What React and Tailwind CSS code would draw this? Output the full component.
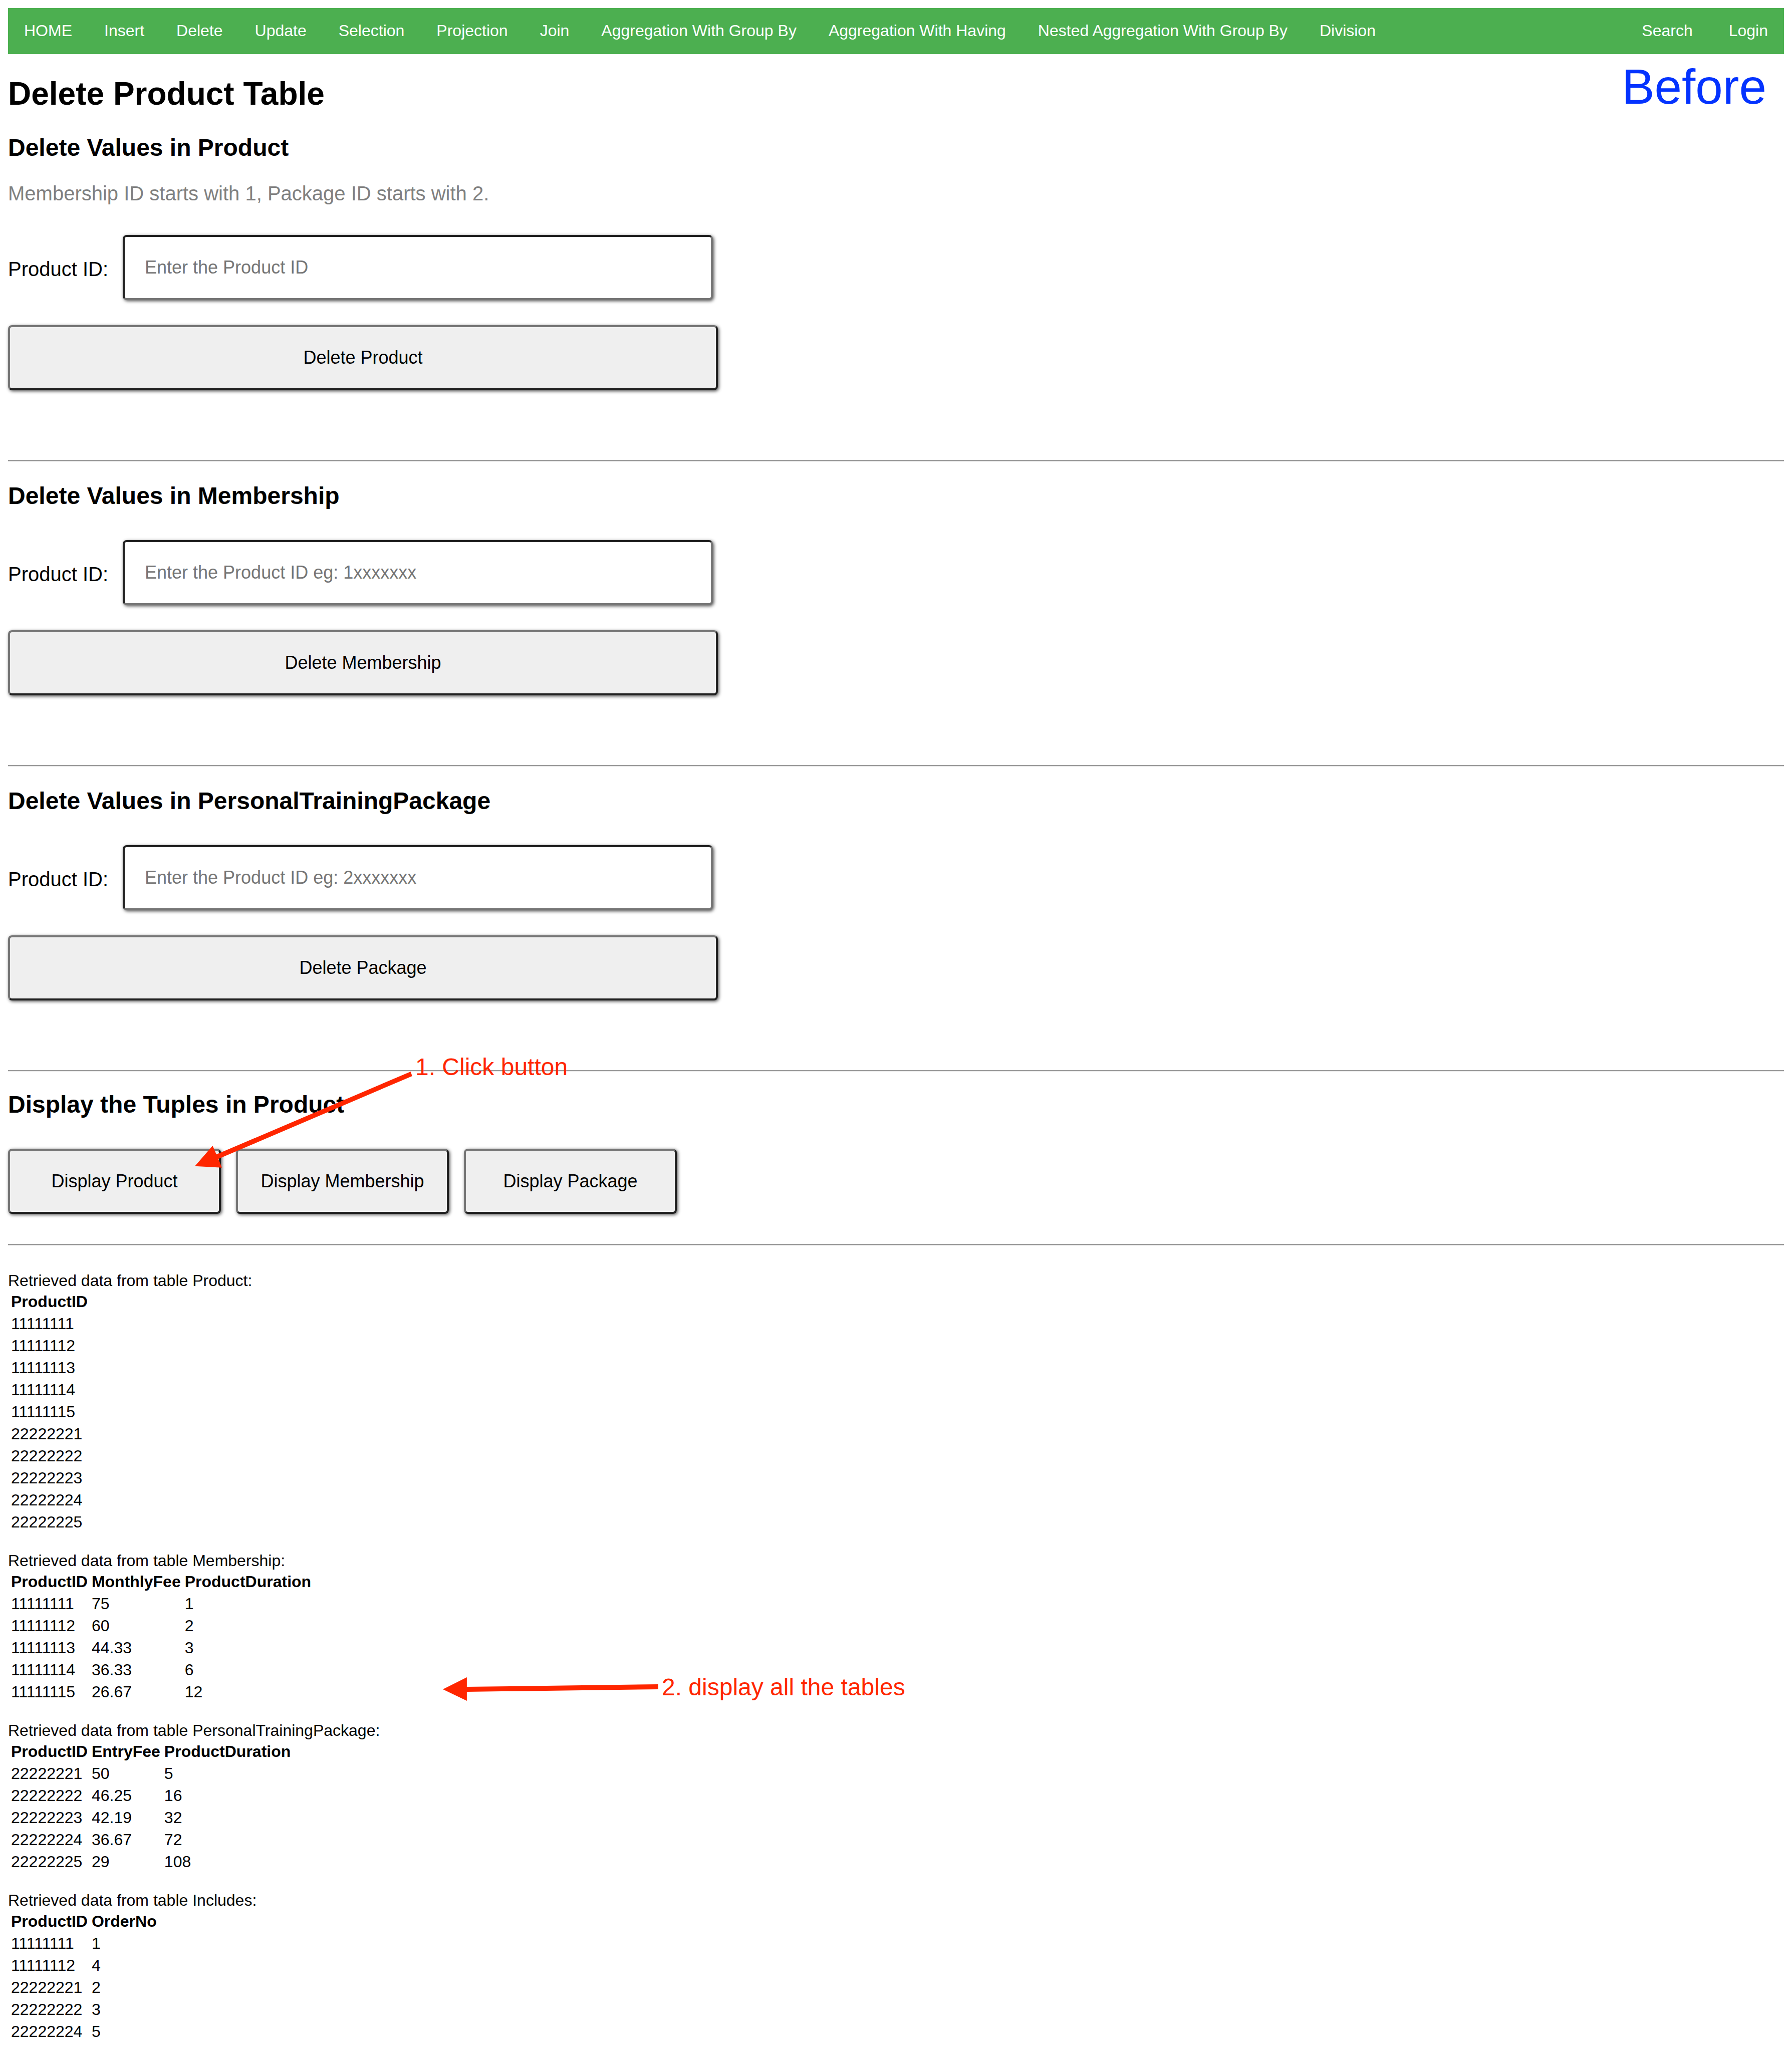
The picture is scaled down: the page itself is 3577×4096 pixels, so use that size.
const links = ["HOME", "Insert", "Delete", "Update", "Selection", "Projection", "Join", "Aggregation With Group By", "Aggregation With Having", "Nested Aggregation With Group By", "Division"];

const forms = [
  { id: "product", title: "Delete Values in Product", note: "Membership ID starts with 1, Package ID starts with 2.", hint: "Enter the Product ID", action: "Delete Product" },
  { id: "membership", title: "Delete Values in Membership", hint: "Enter the Product ID eg: 1xxxxxxx", action: "Delete Membership" },
  { id: "package", title: "Delete Values in PersonalTrainingPackage", hint: "Enter the Product ID eg: 2xxxxxxx", action: "Delete Package" },
];

const tables = [
  { name: "Product", head: ["ProductID"], rows: [["11111111"], ["11111112"], ["11111113"], ["11111114"], ["11111115"], ["22222221"], ["22222222"], ["22222223"], ["22222224"], ["22222225"]] },
  { name: "Membership", head: ["ProductID", "MonthlyFee", "ProductDuration"], rows: [["11111111", "75", "1"], ["11111112", "60", "2"], ["11111113", "44.33", "3"], ["11111114", "36.33", "6"], ["11111115", "26.67", "12"]] },
  { name: "PersonalTrainingPackage", head: ["ProductID", "EntryFee", "ProductDuration"], rows: [["22222221", "50", "5"], ["22222222", "46.25", "16"], ["22222223", "42.19", "32"], ["22222224", "36.67", "72"], ["22222225", "29", "108"]] },
  { name: "Includes", head: ["ProductID", "OrderNo"], rows: [["11111111", "1"], ["11111112", "4"], ["22222221", "2"], ["22222222", "3"], ["22222224", "5"]] },
];

function Rule() {
  return <hr className="h-1 border-0 border-t-2 border-t-[#9a9a9a] bg-[#eeeeee]" />;
}

function NavLink({ children }) {
  return <a href="#" className="px-8 pt-[27px] pb-[29px]">{children}</a>;
}

function Button({ children, className }) {
  return (
    <button type="button" className={"h-[130px] rounded-lg border-4 border-t-[#767676] border-l-[#767676] border-b-[#212121] border-r-[#212121] bg-[#efefef] text-4xl text-black shadow-[2px_2px_6px_#555] " + className}>
      {children}
    </button>
  );
}

function DeleteForm({ id, title, note, hint, action }) {
  return (
    <section className="pb-[139px]">
      <h2 className="text-5xl leading-[56px] font-bold">{title}</h2>
      {note && <p className="mt-10 text-[40px] leading-[46px] text-[#808080]">{note}</p>}
      <form className="mt-[60px]" onSubmit={(e) => e.preventDefault()}>
        <div className="flex items-center">
          <label htmlFor={id} className="w-[229px] pt-1.5 text-[40px] leading-[46px]">Product ID:</label>
          <input id={id} type="text" placeholder={hint} className="h-[130px] w-[1178px] rounded-lg border-4 border-t-[#212121] border-l-[#212121] border-b-[#767676] border-r-[#767676] bg-white px-10 text-4xl shadow-[2px_2px_6px_#555] placeholder:text-[#757575]" />
        </div>
        <Button className="mt-[50px] block w-[1417px]">{action}</Button>
      </form>
    </section>
  );
}

export default function App() {
  return (
    <div className="relative min-h-screen overflow-hidden bg-white px-4 pt-4 font-['Liberation_Sans',Arial,sans-serif] text-[32px] leading-9 text-black">
      <nav className="flex bg-[#4caf50] text-white">
        {links.map((l) => <NavLink key={l}>{l}</NavLink>)}
        <div className="ml-auto flex gap-2">
          <NavLink>Search</NavLink>
          <NavLink>Login</NavLink>
        </div>
      </nav>

      <h1 className="mt-[42px] mb-[43px] text-[64px] leading-[74px] font-bold">Delete Product Table</h1>

      <div className="flex flex-col gap-10">
        {forms.map((f) => (
          <div key={f.id}>
            <DeleteForm {...f} />
            <Rule />
          </div>
        ))}
      </div>

      <h2 className="mt-[37px] text-5xl leading-[56px] font-bold">Display the Tuples in Product</h2>
      <div className="my-[60px] flex gap-[30px]">
        <Button className="w-[425px]">Display Product</Button>
        <Button className="w-[425px]">Display Membership</Button>
        <Button className="w-[425px]">Display Package</Button>
      </div>
      <Rule />

      <div className="mt-[51px] flex flex-col items-start gap-[35px]">
        {tables.map((t) => (
          <section key={t.name}>
            <p>Retrieved data from table {t.name}:</p>
            <table className="border-separate border-spacing-1">
              <thead>
                <tr>{t.head.map((h) => <th key={h} className="p-[2px] text-left font-bold">{h}</th>)}</tr>
              </thead>
              <tbody>
                {t.rows.map((r) => <tr key={r[0]}>{r.map((c, i) => <td key={i} className="p-[2px]">{c}</td>)}</tr>)}
              </tbody>
            </table>
          </section>
        ))}
      </div>

      <p className="absolute top-[117px] right-[51px] text-[98px] leading-[112px] text-[#0433ff]">Before</p>
      <p className="absolute top-[2102px] left-[829px] text-5xl leading-[56px] text-[#ff2600]">1. Click button</p>
      <p className="absolute top-[3340px] left-[1321px] text-5xl leading-[56px] text-[#ff2600]">2. display all the tables</p>
      <svg aria-hidden="true" className="absolute top-[2136px] left-[389px] h-[204px] w-[439px]" viewBox="390 2140 440 204" fill="#ff2600">
        <path d="M390 2332L425.5 2291L433 2308.5L821.7 2142.7L824.7 2151.7L437 2317.5L444 2335Z" />
      </svg>
      <svg aria-hidden="true" className="absolute top-[3343px] left-[878px] h-[60px] w-[439px]" viewBox="880 3350 440 60" fill="#ff2600">
        <path d="M886 3379L934 3355V3374L1317 3369V3379L934 3384V3402Z" />
      </svg>
    </div>
  );
}
